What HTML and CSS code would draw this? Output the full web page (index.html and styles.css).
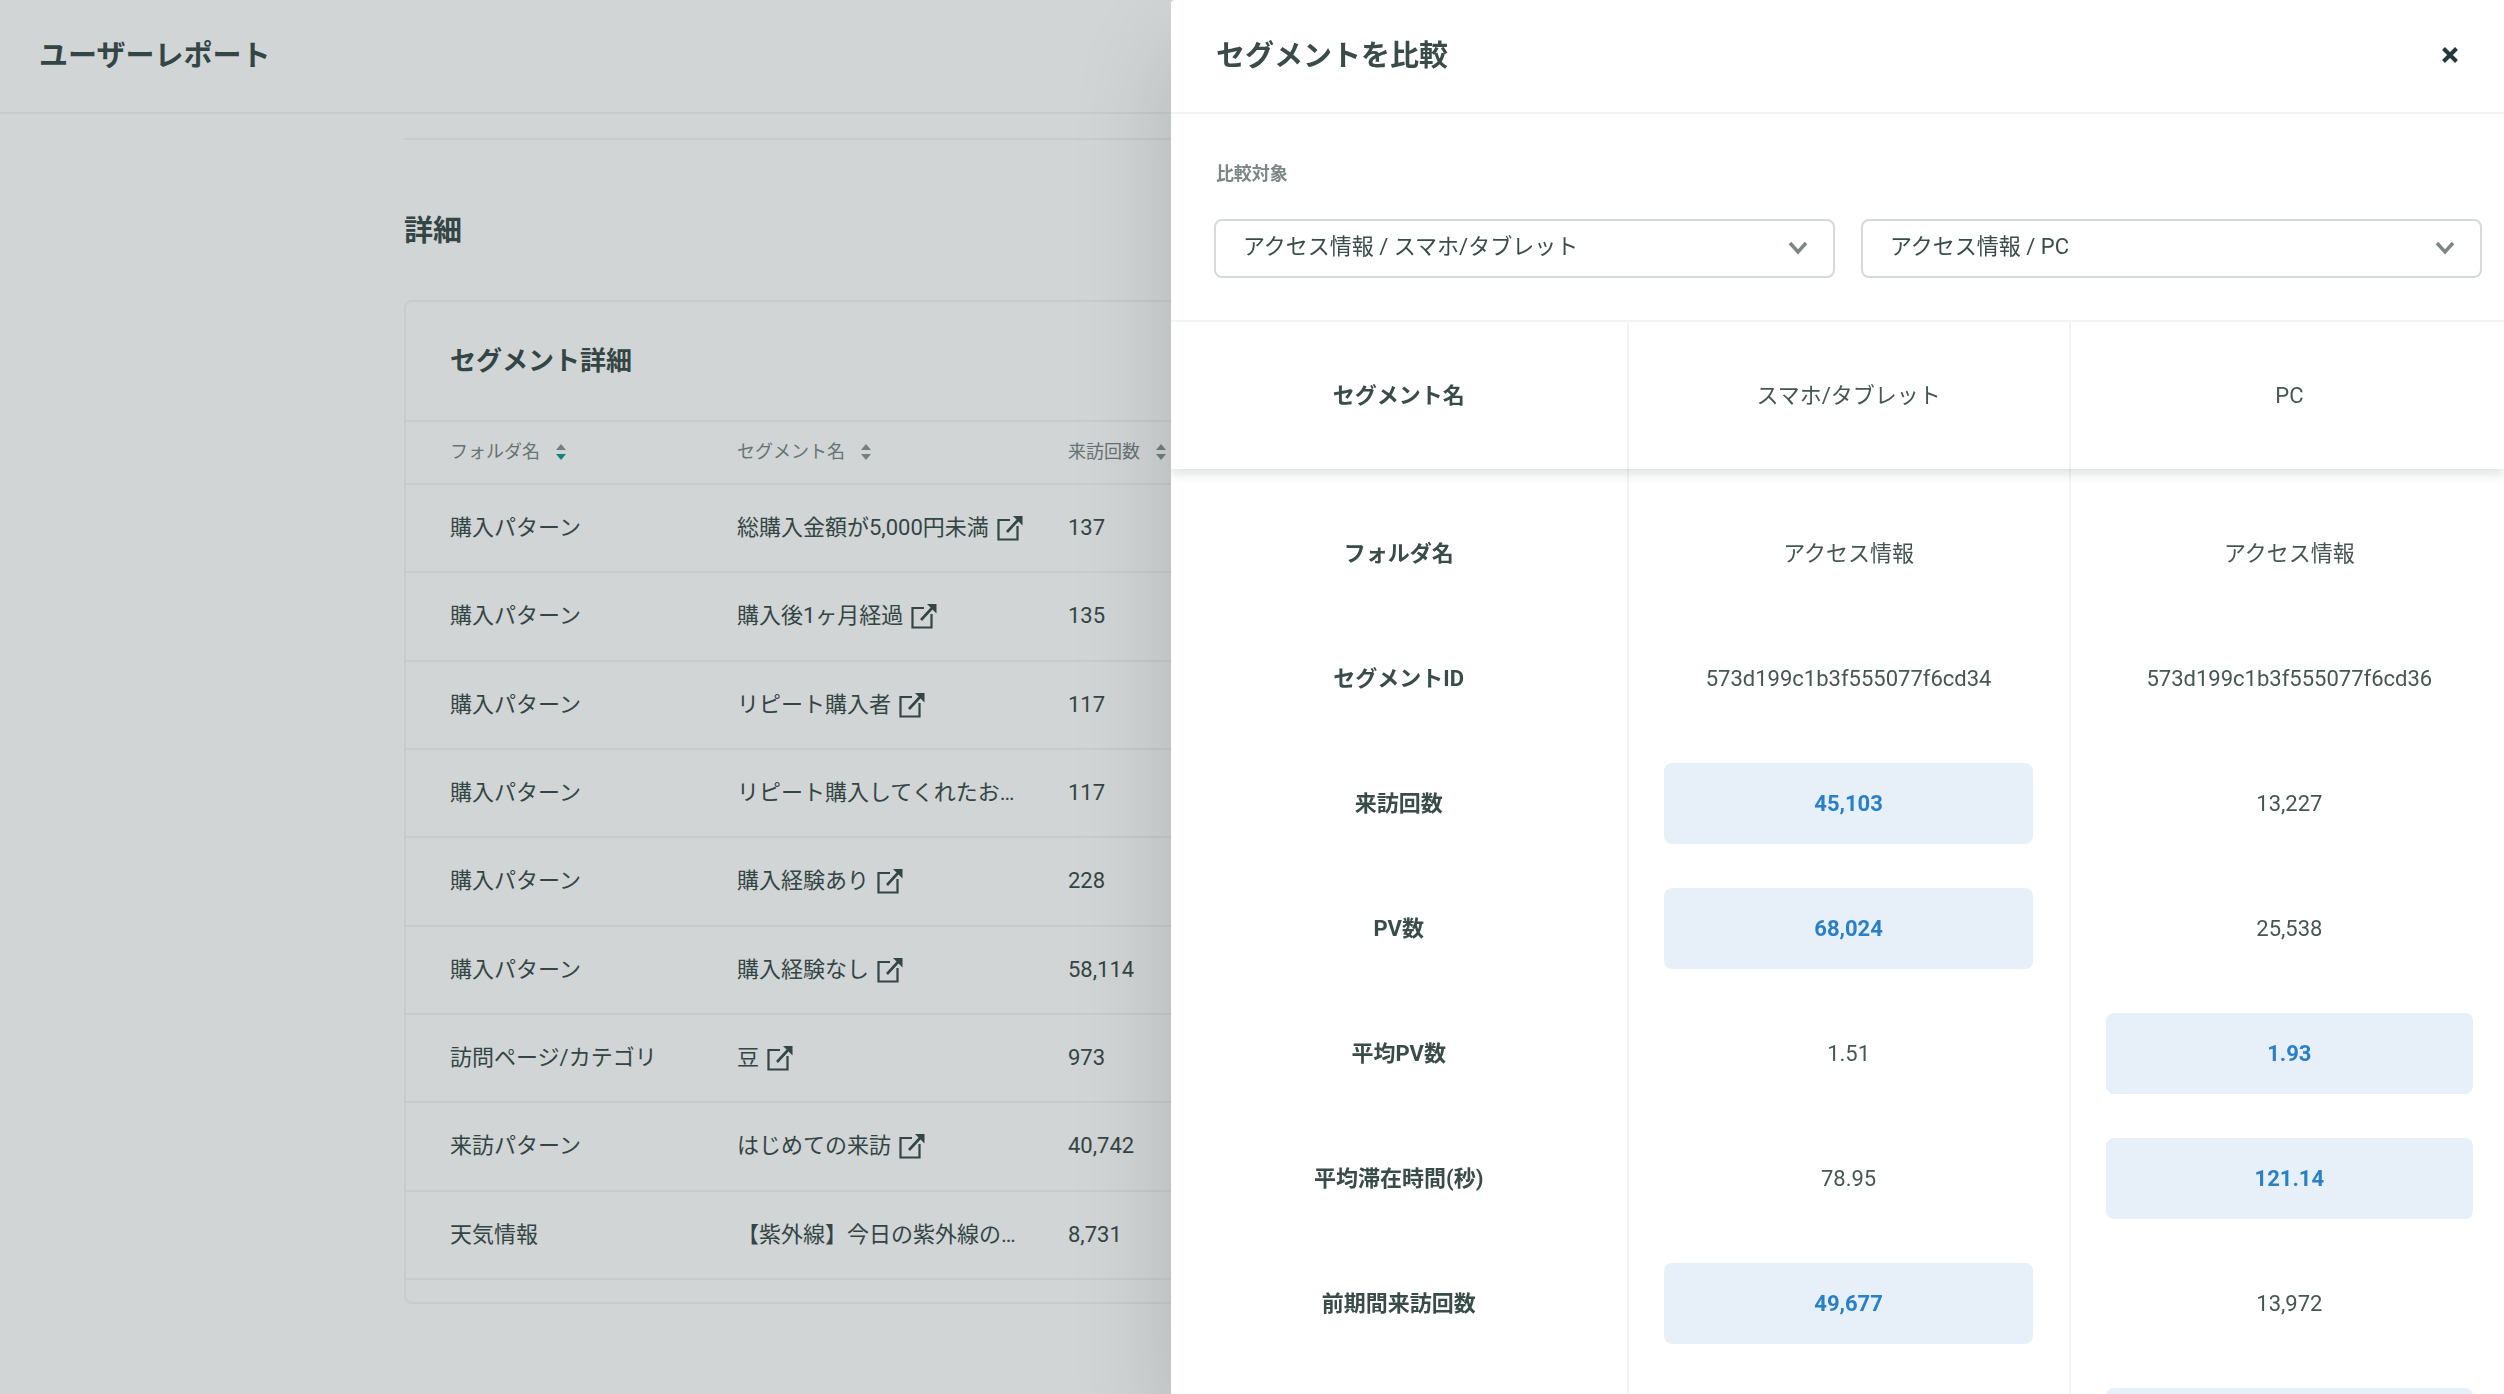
FILE: index.html
```html
<!DOCTYPE html>
<html lang="ja">
<head>
<meta charset="utf-8">
<title>ユーザーレポート</title>
<link rel="stylesheet" href="styles.css">
</head>
<body>
<svg class="defs" aria-hidden="true">
  <symbol id="sort" viewBox="0 0 12 16"><path class="sort-up" d="M6 0 L11 6 H1 Z"/><path class="sort-down" d="M1 10 H11 L6 16 Z"/></symbol>
  <symbol id="ext" viewBox="0 0 26 26"><path d="M13 5 H1.500 V24.500 H20.500 V11" fill="none" stroke="currentColor" stroke-width="2.200"/><path d="M10 17 L21.500 4.500" fill="none" stroke="currentColor" stroke-width="2.600"/><path d="M16 1 H25.500 V10.500 Z" fill="currentColor"/></symbol>
  <symbol id="chevron" viewBox="0 0 20 14"><path d="M2 2 L10 11 L18 2" fill="none" stroke="currentColor" stroke-width="3.400"/></symbol>
</svg>

<div class="page">
  <header class="bar"><h1 class="title">ユーザーレポート</h1></header>
  <main class="content">
    <h2 class="section-title">詳細</h2>
    <section class="card">
      <h3 class="card-title">セグメント詳細</h3>
      <table class="segments">
        <colgroup><col class="col-folder"><col class="col-name"><col></colgroup>
        <thead>
          <tr>
            <th><button class="sort desc">フォルダ名<svg class="sort-icon"><use href="#sort"/></svg></button></th>
            <th><button class="sort">セグメント名<svg class="sort-icon"><use href="#sort"/></svg></button></th>
            <th><button class="sort">来訪回数<svg class="sort-icon"><use href="#sort"/></svg></button></th>
          </tr>
        </thead>
        <tbody>
          <tr><td>購入パターン</td><td><a class="seg" href="#">総購入金額が5,000円未満<svg class="ext"><use href="#ext"/></svg></a></td><td>137</td></tr>
          <tr><td>購入パターン</td><td><a class="seg" href="#">購入後1ヶ月経過<svg class="ext"><use href="#ext"/></svg></a></td><td>135</td></tr>
          <tr><td>購入パターン</td><td><a class="seg" href="#">リピート購入者<svg class="ext"><use href="#ext"/></svg></a></td><td>117</td></tr>
          <tr><td>購入パターン</td><td><a class="seg" href="#">リピート購入してくれたお…</a></td><td>117</td></tr>
          <tr><td>購入パターン</td><td><a class="seg" href="#">購入経験あり<svg class="ext"><use href="#ext"/></svg></a></td><td>228</td></tr>
          <tr><td>購入パターン</td><td><a class="seg" href="#">購入経験なし<svg class="ext"><use href="#ext"/></svg></a></td><td>58,114</td></tr>
          <tr><td>訪問ページ/カテゴリ</td><td><a class="seg" href="#">豆<svg class="ext"><use href="#ext"/></svg></a></td><td>973</td></tr>
          <tr><td>来訪パターン</td><td><a class="seg" href="#">はじめての来訪<svg class="ext"><use href="#ext"/></svg></a></td><td>40,742</td></tr>
          <tr><td>天気情報</td><td><a class="seg" href="#">【紫外線】今日の紫外線の…</a></td><td>8,731</td></tr>
        </tbody>
      </table>
    </section>
  </main>
</div>

<div class="overlay">
  <aside class="drawer" role="dialog" aria-labelledby="drawer-title">
    <header class="bar drawer-bar">
      <h2 class="title" id="drawer-title">セグメントを比較</h2>
      <button class="close" aria-label="閉じる"><svg viewBox="0 0 18 18"><path d="M2.500 2.500 L15.500 15.500 M15.500 2.500 L2.500 15.500"/></svg></button>
    </header>
    <div class="targets">
      <label class="targets-label" for="target-a">比較対象</label>
      <div class="selects">
        <div class="select-box">
          <select class="select" id="target-a"><option>アクセス情報 / スマホ/タブレット</option></select>
          <svg class="chevron"><use href="#chevron"/></svg>
        </div>
        <div class="select-box">
          <select class="select" aria-label="比較対象 2"><option>アクセス情報 / PC</option></select>
          <svg class="chevron"><use href="#chevron"/></svg>
        </div>
      </div>
    </div>
    <table class="compare">
      <colgroup><col class="col-label"><col class="col-value"><col></colgroup>
      <thead>
        <tr><th>セグメント名</th><td>スマホ/タブレット</td><td>PC</td></tr>
      </thead>
      <tbody>
        <tr class="gap"><td></td><td></td><td></td></tr>
        <tr><th>フォルダ名</th><td>アクセス情報</td><td>アクセス情報</td></tr>
        <tr><th>セグメントID</th><td>573d199c1b3f555077f6cd34</td><td>573d199c1b3f555077f6cd36</td></tr>
        <tr><th>来訪回数</th><td><div class="best">45,103</div></td><td>13,227</td></tr>
        <tr><th>PV数</th><td><div class="best">68,024</div></td><td>25,538</td></tr>
        <tr><th>平均PV数</th><td>1.51</td><td><div class="best">1.93</div></td></tr>
        <tr><th>平均滞在時間(秒)</th><td>78.95</td><td><div class="best">121.14</div></td></tr>
        <tr><th>前期間来訪回数</th><td><div class="best">49,677</div></td><td>13,972</td></tr>
        <tr><th></th><td></td><td><div class="best"></div></td></tr>
      </tbody>
    </table>
  </aside>
</div>
</body>
</html>
```
FILE: styles.css
```css
* { box-sizing: border-box; }

body {
  margin: 0;
  height: 100vh;
  overflow: hidden;
  background: #fff;
  color: #3a4c49;
  font-family: Roboto, "Noto Sans CJK JP", sans-serif;
  font-size: 22px;
  line-height: 32px;
}

h1, h2, h3 { margin: 0; }
button { border: 0; padding: 0; background: none; font: inherit; color: inherit; }
a { color: inherit; text-decoration: none; }
table { border-collapse: separate; border-spacing: 0; table-layout: fixed; width: 100%; }
th, td { padding: 0; text-align: left; }

.defs { position: absolute; width: 0; height: 0; }

/* Report page */
.bar {
  display: flex;
  align-items: center;
  height: 114px;
  padding: 0 39px;
  border-bottom: 2px solid #f3f4f4;
}
.title, .section-title { font-size: 29px; line-height: 44px; font-weight: 700; }

.content {
  max-width: 1696px;
  margin: 24px auto 0;
  border-top: 2px solid #f3f4f4;
}
.section-title { padding: 69px 0 47px; }

.card { border: 2px solid #f3f4f4; border-radius: 8px; padding-bottom: 22px; }
.card-title { padding: 40px 44px; font-size: 26px; line-height: 38px; font-weight: 700; }

.segments { height: 860px; }
.col-folder { width: 287px; }
.col-name { width: 331px; }
.segments th, .segments td { padding-left: 44px; border-bottom: 2px solid #f3f4f4; }
.segments th { height: 65px; padding-bottom: 2px; border-top: 2px solid #f3f4f4; font-weight: 400; font-size: 18px; line-height: 28px; color: #7b8685; }
.segments td { height: 88px; }
.sort { display: inline-flex; align-items: center; gap: 15px; }
.sort-icon { width: 12px; height: 16px; --down: #8b9493; }
.sort-up { fill: #8b9493; }
.sort-down { fill: var(--down); }
.desc .sort-icon { --down: #0e9d8c; }
.seg { display: flex; align-items: center; gap: 8px; white-space: nowrap; }
.ext { width: 26px; height: 26px; }

/* Comparison drawer */
.overlay {
  position: fixed;
  inset: 0;
  display: flex;
  justify-content: flex-end;
  background: rgba(25, 45, 50, .2);
}
.drawer {
  width: 53.24%;
  overflow: hidden;
  border-radius: 4px 0 0 0;
  background: #fff;
  box-shadow: 0 50px 100px rgba(0, 0, 0, .16);
}
.drawer-bar { justify-content: space-between; padding: 0 45px; }
.close { display: flex; padding-bottom: 2px; }
.close svg { width: 18px; height: 18px; fill: none; stroke: #22383a; stroke-width: 4; }

.targets { display: flex; flex-direction: column; gap: 30px; padding: 45px 22px 42px 43px; }
.targets-label { padding-left: 2px; font-size: 18px; line-height: 30px; font-weight: 700; color: #7b8685; }
.selects { display: flex; gap: 26px; }
.select-box { position: relative; flex: 1; }
.select {
  display: block;
  width: 100%;
  height: 59px;
  padding: 0 56px 4px 27px;
  appearance: none;
  border: 2px solid #d6dad9;
  border-radius: 8px;
  background: #fff;
  color: inherit;
  font: inherit;
}
.chevron { position: absolute; right: 27px; top: 22px; width: 20px; height: 14px; color: #7b8685; pointer-events: none; }

.compare { text-align: center; }
.col-label { width: 34.4%; }
.col-value { width: 33.1%; }
.compare th, .compare td { height: 125px; padding: 0 36px 0 35px; text-align: center; }
.compare td { color: #465653; }
.compare td:last-child { padding-right: 31px; }
.compare th { font-weight: 700; }
.compare th, .compare td:not(:last-child) { border-right: 2px solid #f3f4f4; }
.compare thead { box-shadow: 0 5px 10px rgba(52, 73, 70, .16); clip-path: inset(0 0 -20px 0); }
.compare thead th, .compare thead td { height: 149px; border-top: 2px solid #f3f4f4; }
.compare .gap td { height: 22px; }
.best {
  height: 81px;
  border-radius: 8px;
  background: #e7f0f8;
  color: #2a7fc9;
  font-weight: 700;
  line-height: 81px;
}
```
